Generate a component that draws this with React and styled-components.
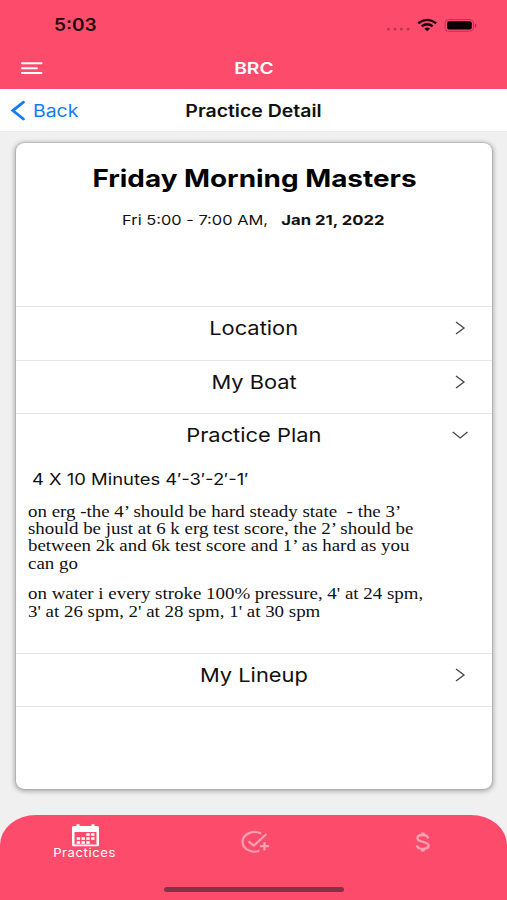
import React from "react";
import styled, { createGlobalStyle } from "styled-components";

const PINK = "#fd4b6c";

const GlobalStyle = createGlobalStyle`
  * { box-sizing: border-box; }
  html, body { margin: 0; padding: 0; background: #f0f0f0; }
`;

const Screen = styled.div`
  display: flex;
  flex-direction: column;
  width: 507px;
  height: 900px;
  overflow: hidden;
  background: #f0f0f0;
  color: #111;
  font-family: Inter, "Liberation Sans", sans-serif;
`;

/* Wide-set text: glyphs are stretched horizontally. */
const Wide = styled.span`
  display: block;
  width: max-content;
  white-space: pre;
  font-size: ${(p) => p.$size}px;
  font-weight: ${(p) => p.$weight || 400};
  line-height: ${(p) => p.$line || 20}px;
  letter-spacing: ${(p) => p.$spacing || 0}px;
  color: ${(p) => p.$color || "#111"};
  transform: scaleX(${(p) => p.$x || 1.2});
  transform-origin: ${(p) => p.$origin || "center"};
`;

const Top = styled.header`
  flex: none;
  height: 89px;
  background: ${PINK};
`;

const StatusBar = styled.div`
  display: flex;
  align-items: center;
  justify-content: space-between;
  height: 48px;
  padding: 1px 30px 0 54px;
`;

const StatusIcons = styled.svg`
  display: block;
  width: 92px;
  height: 20px;
`;

const TitleBar = styled.div`
  display: grid;
  grid-template-columns: 1fr auto 1fr;
  align-items: center;
  height: 39px;
  padding: 0 21px;
`;

const MenuIcon = styled.svg`
  display: block;
  width: 22px;
  height: 14px;
`;

const SubBar = styled.div`
  flex: none;
  display: grid;
  grid-template-columns: 1fr auto 1fr;
  align-items: center;
  height: 43px;
  padding: 2px 10px 0;
  background: #fff;
  border-bottom: 1px solid #ececec;
`;

const Back = styled.div`
  display: flex;
  align-items: center;
  gap: 7px;
`;

const BackIcon = styled.svg`
  display: block;
  width: 16px;
  height: 22px;
`;

const Card = styled.main`
  flex: none;
  height: 646px;
  margin: 11px 15px 0 16px;
  background: #fff;
  border-radius: 9px / 8px;
  box-shadow: 0 0 1px 1px rgba(0, 0, 0, 0.1), 0 1px 4px 2px rgba(0, 0, 0, 0.24);
`;

const Heading = styled.section`
  display: flex;
  flex-direction: column;
  align-items: center;
  height: 163px;
  padding-top: 20px;
`;

const When = styled.div`
  display: flex;
  width: 263px;
  justify-content: space-between;
  margin: 16px 2px 0 0;
`;

const Section = styled.section`
  height: ${(p) => p.$height}px;
  border-top: 1px solid #e6e6e6;
`;

const SectionHead = styled.div`
  display: grid;
  grid-template-columns: 1fr auto 1fr;
  align-items: center;
  height: 42px;
  padding: 0 23px;
`;

const Chevron = styled.svg`
  display: block;
  grid-column: 3;
  justify-self: end;
  width: 18px;
  height: 18px;
`;

const Label = styled.div`
  grid-column: 2;
  padding-top: 2px;
`;

const Plan = styled.div`
  padding: 12px 0 0 12px;
`;

const PlanTitle = styled.div`
  padding-left: 4px;
`;

const Note = styled.p`
  margin: ${(p) => p.$top}px 0 0;
  font-family: "Liberation Serif", serif;
`;

const TabBar = styled.nav`
  display: flex;
  flex-direction: column;
  align-items: center;
  justify-content: space-between;
  height: 85.5px;
  margin-top: auto;
  padding-bottom: 8px;
  background: ${PINK};
  border-radius: 36px 36px 0 0 / 30px 30px 0 0;
`;

const Tabs = styled.div`
  display: grid;
  grid-template-columns: repeat(3, 1fr);
  width: 507px;
  height: 54px;
`;

const Tab = styled.div`
  display: flex;
  flex-direction: column;
  align-items: center;
  padding-top: ${(p) => p.$top}px;
`;

const TabIcon = styled.svg`
  display: block;
  width: ${(p) => p.$w}px;
  height: ${(p) => p.$h}px;
`;

const HomeIndicator = styled.div`
  width: 180px;
  height: 5px;
  border-radius: 3px;
  background: #823447;
`;

function SectionRow({ title, open }) {
  return (
    <SectionHead>
      <Label>
        <Wide $size={19} $x={1.15} $line={24}>{title}</Wide>
      </Label>
      <Chevron viewBox="0 0 18 18" fill="none" stroke="#444" strokeWidth="1.3">
        <path d={open ? "M1.8 6 L9.2 12 L16.5 6" : "M5 3 L13 9 L5 15"} />
      </Chevron>
    </SectionHead>
  );
}

const NOTES = [
  {
    top: 12.5,
    lines: [
      "on erg -the 4’ should be hard steady state  - the 3’",
      "should be just at 6 k erg test score, the 2’ should be",
      "between 2k and 6k test score and 1’ as hard as you",
      "can go",
    ],
  },
  {
    top: 13,
    lines: [
      "on water i every stroke 100% pressure, 4' at 24 spm,",
      "3' at 26 spm, 2' at 28 spm, 1' at 30 spm",
    ],
  },
];

const DAYS = [
  [86.8, 833.2], [91.6, 833.2],
  [77.2, 837.2], [82, 837.2], [86.8, 837.2], [91.6, 837.2],
  [77.2, 841.2], [82, 841.2], [86.8, 841.2],
];

export default function App() {
  return (
    <Screen>
      <GlobalStyle />
      <Top>
        <StatusBar>
          <Wide $size={17} $weight={600} $x={1.12} $origin="left" $color="#24060c">5:03</Wide>
          <StatusIcons viewBox="385 14 92 20">
            <g fill="#b93650">
              <circle cx="388.5" cy="28.2" r="1.4" />
              <circle cx="395" cy="28.2" r="1.4" />
              <circle cx="401.5" cy="28.2" r="1.4" />
              <circle cx="408" cy="28.2" r="1.4" />
            </g>
            <g fill="none" stroke="#13050a" strokeWidth="2.3">
              <path d="M418.2 22.2 Q427.2 15.6 436.2 22.2" />
              <path d="M421.7 25.2 Q427.2 21.2 432.7 25.2" />
            </g>
            <path d="M424.3 27.6 Q427.2 25.4 430.1 27.6 L427.2 30.2 Z" fill="#13050a" />
            <rect x="445" y="18.5" width="28.5" height="11.8" rx="3.6" fill="none" stroke="#b63a52" strokeWidth="1" />
            <rect x="447" y="20.2" width="24.8" height="8.4" rx="2" fill="#0a0205" />
            <path d="M475 22.5 Q477.6 24.4 475 26.4 Z" fill="#a2344b" />
          </StatusIcons>
        </StatusBar>
        <TitleBar>
          <MenuIcon viewBox="21 61 22 14" stroke="#fff" strokeWidth="2" strokeLinecap="round">
            <path d="M22 63.3 H41.5 M22 68.3 H37 M22 73 H41.5" />
          </MenuIcon>
          <Wide $size={16.5} $weight={600} $x={1.17} $color="#fff">BRC</Wide>
        </TitleBar>
      </Top>

      <SubBar>
        <Back>
          <BackIcon viewBox="0 0 16 22" fill="none" stroke="#127bf5" strokeWidth="2.8" strokeLinecap="round">
            <path d="M13.5 2.2 L2.8 10.6 L13.5 19" />
          </BackIcon>
          <Wide $size={17} $x={1.14} $origin="left" $color="#127bf5">Back</Wide>
        </Back>
        <Wide $size={17} $weight={600} $x={1.145}>Practice Detail</Wide>
      </SubBar>

      <Card>
        <Heading>
          <Wide $size={24} $weight={700} $x={1.162} $line={32} $color="#000">Friday Morning Masters</Wide>
          <When>
            <Wide $size={13.5} $x={1.215} $origin="left" $line={18}>Fri 5:00 - 7:00 AM,</Wide>
            <Wide $size={13.5} $weight={700} $x={1.235} $origin="right" $line={18}>Jan 21, 2022</Wide>
          </When>
        </Heading>
        <Section $height={53.5}><SectionRow title="Location" /></Section>
        <Section $height={53.5}><SectionRow title="My Boat" /></Section>
        <Section $height={240}>
          <SectionRow title="Practice Plan" open />
          <Plan>
            <PlanTitle>
              <Wide $size={16} $x={1.15} $origin="left" $line={22}>4 X 10 Minutes 4′-3′-2′-1′</Wide>
            </PlanTitle>
            {NOTES.map((note) => (
              <Note key={note.top} $top={note.top}>
                {note.lines.map((text) => (
                  <Wide key={text} $size={16} $x={1.182} $origin="left" $line={17.4}>{text}</Wide>
                ))}
              </Note>
            ))}
          </Plan>
        </Section>
        <Section $height={53}><SectionRow title="My Lineup" /></Section>
        <Section $height={60} />
      </Card>

      <TabBar>
        <Tabs>
          <Tab $top={9.5}>
            <TabIcon $w={28} $h={23} viewBox="71.5 824 28 23">
              <path
                fill="#fff"
                fillRule="evenodd"
                d="M74 826 H77 V824.3 H80 V826 H92 V824.3 H95 V826 H98 Q99.5 826 99.5 827.5 V845 Q99.5 846.3 98 846.3 H74 Q72.5 846.3 72.5 845 V827.5 Q72.5 826 74 826 Z M75 832 V844.6 H97 V832 Z"
              />
              <g fill="#fff">
                {DAYS.map(([x, y]) => (
                  <rect key={`${x}-${y}`} x={x} y={y} width="3.4" height="2.6" />
                ))}
              </g>
            </TabIcon>
            <Wide $size={11.5} $x={1.14} $line={12} $spacing={0.5} $color="#fff">Practices</Wide>
          </Tab>
          <Tab $top={15}>
            <TabIcon $w={30} $h={24} viewBox="239 830 30 24" fill="none" stroke="#ffa0b1" strokeWidth="2.2">
              <path d="M261 833.6 A12 9.8 0 1 0 259.5 850.8" />
              <path d="M248.5 841.3 L253.8 845.6 L266.5 834" />
              <path d="M264.5 842 V850.4 M260 846.2 H269" />
            </TabIcon>
          </Tab>
          <Tab $top={17}>
            <TabIcon $w={16} $h={22} viewBox="414.5 832 16 22" fill="none" stroke="#ffa0b1" strokeWidth="2.5">
              <path d="M427.6 838.4 C427 835.8 424.8 835 422 835 C419 835 417 836.2 417 838.2 C417 843 428 840.8 428 845.6 C428 848 425.8 849 422.5 849 C419 849 416.8 847.8 416.4 845.4" />
              <path d="M422.4 832.5 V835.4 M422.4 848.6 V851.5" strokeWidth="3.6" />
            </TabIcon>
          </Tab>
        </Tabs>
        <HomeIndicator />
      </TabBar>
    </Screen>
  );
}
